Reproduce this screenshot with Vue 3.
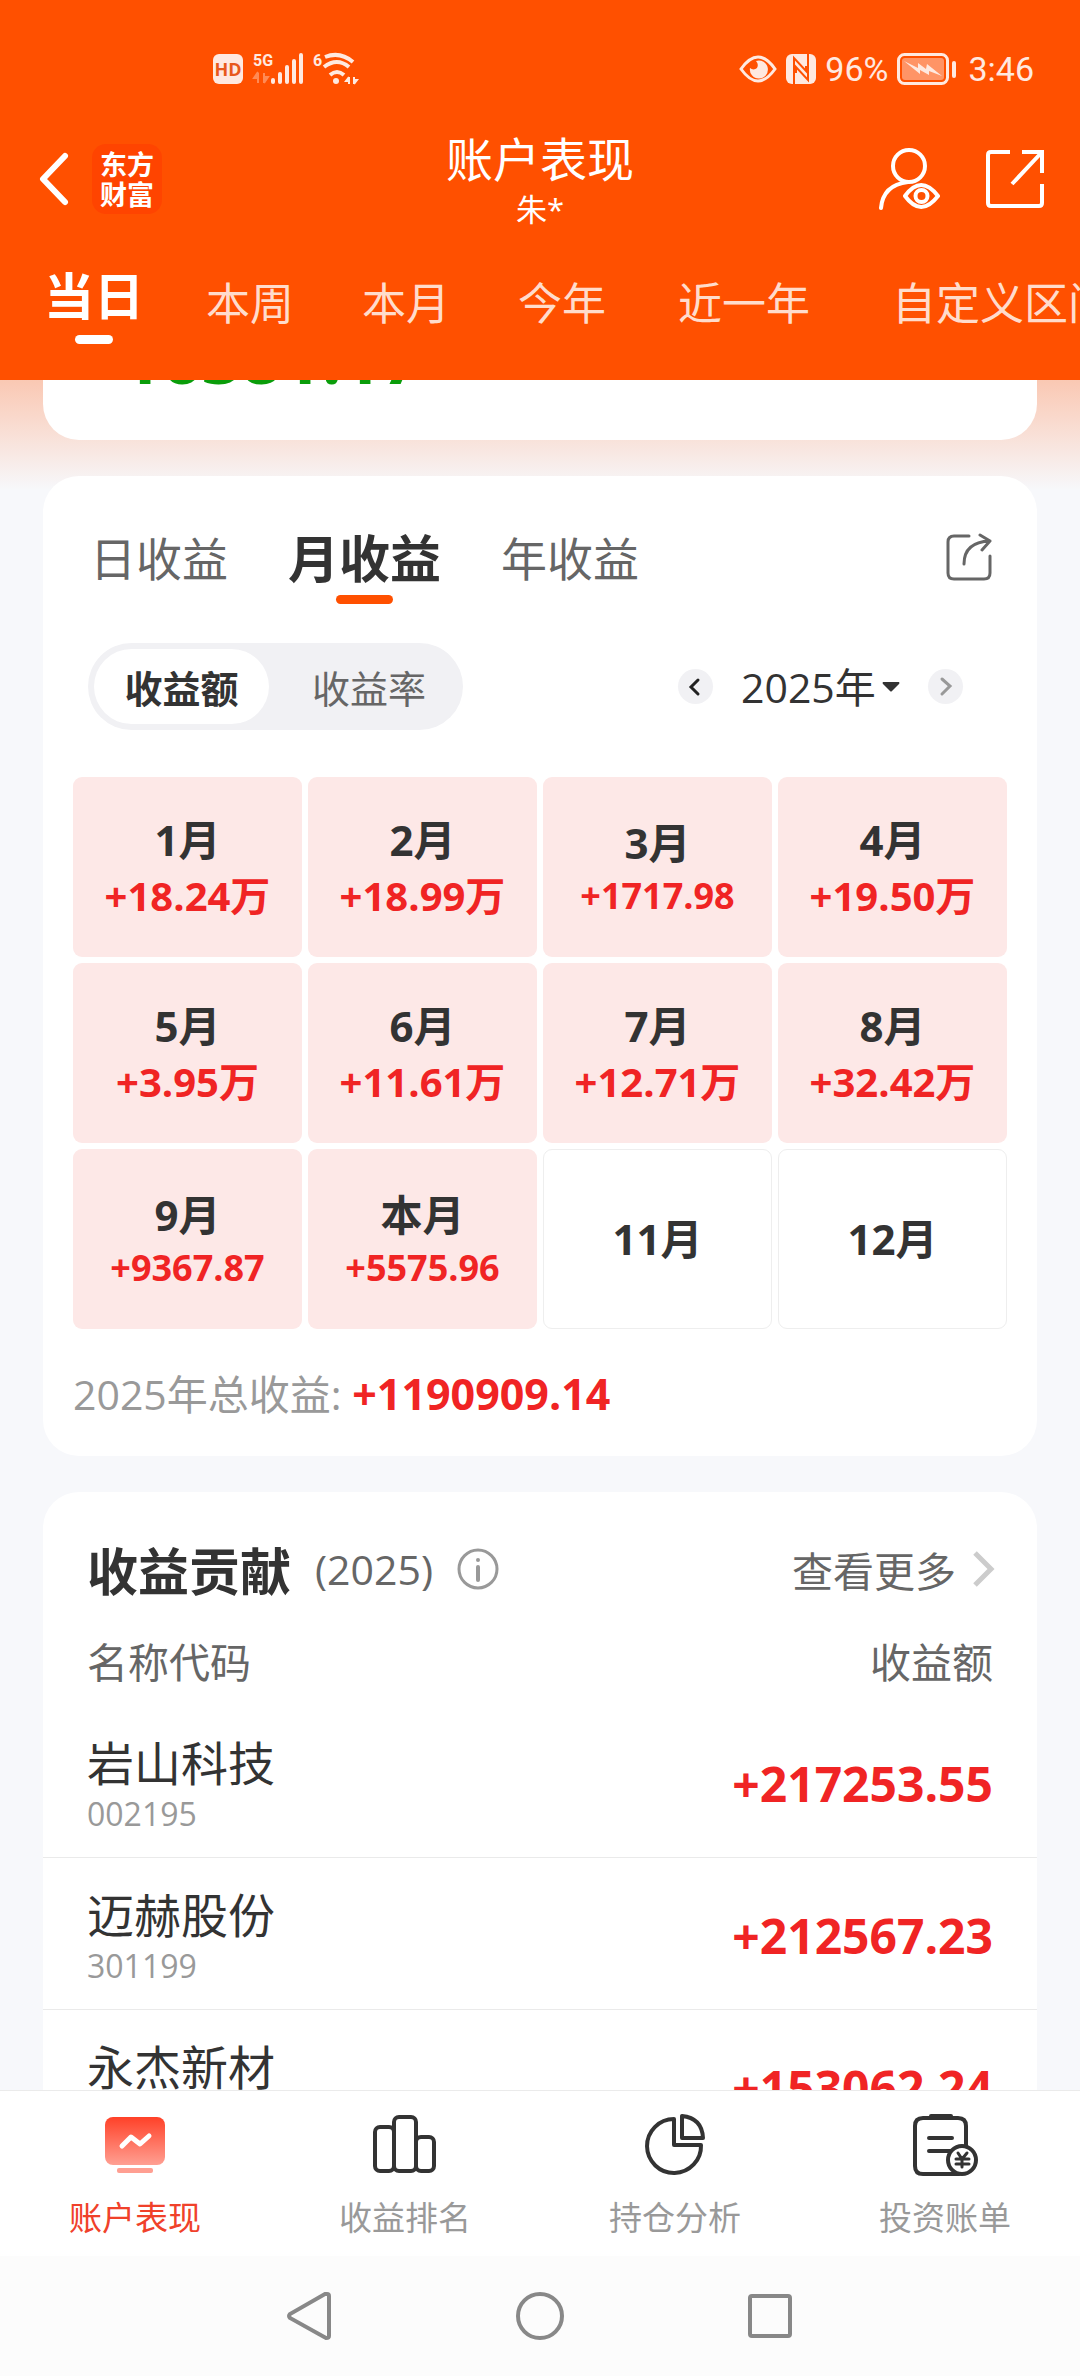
<template>
  <div class="page">
    <header class="header">
      <!-- Barra de estado -->
      <div class="status">
        <svg class="status-left" width="146" height="34" viewBox="0 0 146 34">
          <rect x="0" y="2" width="30" height="30" rx="6" fill="#ffe9e0" />
          <text x="15" y="24" class="hd" text-anchor="middle">HD</text>
          <text x="40" y="14" class="net">5G</text>
          <path d="M45 21v10M45 20l-4 6h4M51 21v10M51 31l4-6h-4" fill="#ff8a55" stroke="#ff8a55" stroke-width="2" />
          <g stroke="#ffe9e0" stroke-width="4" stroke-linecap="round">
            <path d="M60 28v2M67 22v8M74 15v15M81 9v21M88 3v27" />
          </g>
          <text x="100" y="14" class="net">6</text>
          <g fill="none" stroke="#ffe9e0" stroke-width="4">
            <path d="M112 5q15 -6 28 5M111 15q13 -10 25 0M117 23q7 -6 14 0" />
          </g>
          <circle cx="123" cy="29" r="3" fill="#ffe9e0" />
          <path d="M136 25v7M136 25l-3 4h3M141 25v7M141 32l3-4h-3" fill="#ffe9e0" stroke="#ffe9e0" stroke-width="2" />
        </svg>
        <div class="status-right">
          <svg width="38" height="28" viewBox="0 0 38 28">
            <path d="M2 14Q19 -10 36 14Q19 38 2 14z" fill="none" stroke="#ffe9e0" stroke-width="3" />
            <path d="M17 6a9 9 0 1 1-6 7a5 5 0 0 0 7 0q2-4-1-7z" fill="#ffe9e0" />
          </svg>
          <svg width="30" height="30" viewBox="0 0 30 30">
            <rect width="30" height="30" rx="6" fill="#ffe9e0" />
            <path d="M8 30V4L20 17V12M22 0v26L10 13v6" fill="none" stroke="#ff5000" stroke-width="2" />
          </svg>
          <span>96%</span>
          <svg class="battery" width="60" height="32" viewBox="0 0 60 32">
            <rect x="1.500" y="1.500" width="49" height="29" rx="6" fill="none" stroke="#ffe9e0" stroke-width="3" />
            <rect x="5" y="5" width="42" height="22" rx="3" fill="#ff9466" />
            <path d="M7 8l14 7 0-5 8 6 1-5 15 12-13-5 0 4-9-5 0 4z" fill="#ffe9e0" />
            <rect x="55" y="8" width="4" height="17" rx="2" fill="#ffe9e0" />
          </svg>
          <span>3:46</span>
        </div>
      </div>

      <!-- Navegación -->
      <div class="nav">
        <div class="nav-left">
          <button class="icon-btn" aria-label="返回">
            <svg width="34" height="58" viewBox="0 0 34 58">
              <path d="M29 6L7 29l22 23" fill="none" stroke="#fff" stroke-width="6" stroke-linecap="round" stroke-linejoin="round" />
            </svg>
          </button>
          <div class="logo"><span>东方</span><span>财富</span></div>
        </div>
        <div class="nav-title">
          <h1>账户表现</h1>
          <p>朱*</p>
        </div>
        <div class="nav-right">
          <button class="icon-btn" aria-label="账户">
            <svg width="62" height="62" viewBox="0 0 62 62" fill="none" stroke="#fff" stroke-width="4" stroke-linecap="round">
              <circle cx="31" cy="18" r="16" />
              <path d="M3 60Q5 37 30 34" />
              <path d="M27 48Q43 26 60 48Q43 70 27 48z" stroke-linejoin="round" />
              <circle cx="43.500" cy="48" r="6" />
            </svg>
          </button>
          <button class="icon-btn" aria-label="分享">
            <svg width="58" height="60" viewBox="0 0 58 60" fill="none" stroke="#fff" stroke-width="4">
              <path d="M24 3H5Q2 3 2 6V54Q2 57 5 57H53Q56 57 56 54V35M36 3H56V24M56 3L26 35" />
            </svg>
          </button>
        </div>
      </div>

      <nav class="ranges">
        <button
          v-for="r in ranges"
          :key="r"
          class="range"
          :class="{ active: r === range, wide: r.length > 2, custom: r.length > 4 }"
          @click="range = r"
        >
          {{ r }}
        </button>
      </nav>
    </header>

    <main class="content">
      <section class="card summary"><strong>-16381.17</strong></section>

      <!-- Calendario de ganancias -->
      <section class="card calendar">
        <div class="period-row">
          <button
            v-for="p in periods"
            :key="p"
            class="period"
            :class="{ active: p === period }"
            @click="period = p"
          >
            {{ p }}
          </button>
          <button class="icon-btn share" aria-label="分享收益">
            <svg width="46" height="48" viewBox="0 0 46 48" fill="none" stroke="#666" stroke-width="3" stroke-linecap="round" stroke-linejoin="round">
              <path d="M23 3H8Q2 3 2 9V40Q2 46 8 46H38Q44 46 44 40V23" />
              <path d="M18 31Q18 9 44 8M34 2L44 8L36 17" />
            </svg>
          </button>
        </div>

        <div class="filter-row">
          <div class="segment">
            <button :class="{ active: mode === 'amount' }" @click="mode = 'amount'">收益额</button>
            <button :class="{ active: mode === 'rate' }" @click="mode = 'rate'">收益率</button>
          </div>
          <div class="year-nav">
            <button class="round" aria-label="上一年">
              <svg width="35" height="35" viewBox="0 0 35 35"><path d="M20 11L13 18l7 7" fill="none" stroke="#222" stroke-width="3" stroke-linecap="round" /></svg>
            </button>
            <label class="year">
              <select v-model="year" aria-label="年份">
                <option value="2025">2025年</option>
                <option value="2024">2024年</option>
              </select>
              <svg width="18" height="10" viewBox="0 0 18 10"><path d="M1 0H17Q18 1 17 2L10 9Q9 10 8 9L1 2Q0 1 1 0z" fill="#333" /></svg>
            </label>
            <button class="round" aria-label="下一年">
              <svg width="35" height="35" viewBox="0 0 35 35"><path d="M14 10L22 17l-8 8" fill="none" stroke="#999" stroke-width="3" stroke-linecap="round" /></svg>
            </button>
          </div>
        </div>

        <div class="months">
          <div v-for="m in months" :key="m.name" class="month" :class="{ empty: !m.value }">
            <span class="month-name">{{ m.name }}</span>
            <span v-if="m.value" class="month-value" :class="{ small: !m.value.includes('万') }">{{ m.value }}</span>
          </div>
        </div>

        <p class="total">{{ year }}年总收益: <strong>+1190909.14</strong></p>
      </section>

      <!-- Contribución -->
      <section class="card contribution">
        <div class="contribution-head">
          <h2>收益贡献</h2>
          <span class="contribution-year">({{ year }})</span>
          <button class="icon-btn" aria-label="说明">
            <svg width="42" height="42" viewBox="0 0 42 42" fill="none" stroke="#999" stroke-width="3">
              <circle cx="21" cy="21" r="19" />
              <path d="M21 19V32" stroke-width="4" stroke-linecap="round" />
              <circle cx="21" cy="12" r="2" fill="#999" stroke="none" />
            </svg>
          </button>
          <a href="#" class="more">
            查看更多
            <svg width="22" height="36" viewBox="0 0 22 36"><path d="M2 2L18 18L2 34" fill="none" stroke="#ccc" stroke-width="5" /></svg>
          </a>
        </div>
        <table>
          <thead>
            <tr>
              <th>名称代码</th>
              <th class="right">收益额</th>
            </tr>
          </thead>
          <tbody>
            <tr v-for="s in stocks" :key="s.code">
              <td>
                <div class="stock-name">{{ s.name }}</div>
                <div class="stock-code">{{ s.code }}</div>
              </td>
              <td class="right profit">{{ s.profit }}</td>
            </tr>
          </tbody>
        </table>
      </section>
    </main>

    <nav class="tabbar">
      <a href="#" class="active">
        <svg width="66" height="66" viewBox="0 0 66 66">
          <defs>
            <linearGradient id="screen" x1="0" y1="0" x2="0" y2="1">
              <stop offset="0" stop-color="#ff4128" />
              <stop offset="1" stop-color="#ff9f92" />
            </linearGradient>
          </defs>
          <rect x="3" y="5" width="60" height="48" rx="8" fill="url(#screen)" />
          <path d="M20 34L29 25L38 32L47 24" fill="none" stroke="#fff" stroke-width="5" stroke-linecap="round" stroke-linejoin="round" />
          <rect x="15" y="56" width="36" height="5" rx="2" fill="#ff9f92" />
        </svg>
        <span>账户表现</span>
      </a>
      <a href="#">
        <svg width="66" height="66" viewBox="0 0 66 66" fill="none" stroke="#333" stroke-width="4">
          <rect x="3" y="15" width="19" height="44" rx="5" />
          <rect x="22" y="5" width="22" height="54" rx="5" />
          <rect x="44" y="25" width="18" height="34" rx="5" />
        </svg>
        <span>收益排名</span>
      </a>
      <a href="#">
        <svg width="66" height="66" viewBox="0 0 66 66" fill="none" stroke="#333" stroke-width="4" stroke-linejoin="round">
          <path d="M32 7A27 27 0 1 0 59 33H32z" />
          <path d="M40 4V26H61Q60 6 40 4z" />
        </svg>
        <span>持仓分析</span>
      </a>
      <a href="#">
        <svg width="66" height="66" viewBox="0 0 66 66" fill="none" stroke="#333" stroke-width="4" stroke-linecap="round">
          <path d="M47 62H11Q3 62 3 54V14Q3 6 11 6H46Q54 6 54 14V36" />
          <path d="M19 4H39M17 26H40M17 39H38" />
          <circle cx="50" cy="48" r="14" fill="#fff" />
          <path d="M46 41L50 47L55 41M50 47V55M44 47H57M44 52H57" stroke-width="3" />
        </svg>
        <span>投资账单</span>
      </a>
    </nav>

    <div class="sysnav">
      <button class="icon-btn" aria-label="后退">
        <svg width="48" height="48" viewBox="0 0 48 48"><path d="M41 2Q43 2 43 4V44Q43 46 40 46L4 26Q2 24 4 22L39 2z" fill="none" stroke="#888" stroke-width="4" /></svg>
      </button>
      <button class="icon-btn" aria-label="主页">
        <svg width="48" height="48" viewBox="0 0 48 48"><circle cx="24" cy="24" r="22" fill="none" stroke="#888" stroke-width="4" /></svg>
      </button>
      <button class="icon-btn" aria-label="最近">
        <svg width="48" height="48" viewBox="0 0 48 48"><rect x="4" y="4" width="40" height="40" rx="2" fill="none" stroke="#888" stroke-width="4" /></svg>
      </button>
    </div>
  </div>
</template>

<script setup>
import { ref } from 'vue'

const ranges = ['当日', '本周', '本月', '今年', '近一年', '自定义区间']
const range = ref('当日')

const periods = ['日收益', '月收益', '年收益']
const period = ref('月收益')

const mode = ref('amount')
const year = ref('2025')

const months = [
  { name: '1月', value: '+18.24万' },
  { name: '2月', value: '+18.99万' },
  { name: '3月', value: '+1717.98' },
  { name: '4月', value: '+19.50万' },
  { name: '5月', value: '+3.95万' },
  { name: '6月', value: '+11.61万' },
  { name: '7月', value: '+12.71万' },
  { name: '8月', value: '+32.42万' },
  { name: '9月', value: '+9367.87' },
  { name: '本月', value: '+5575.96' },
  { name: '11月', value: '' },
  { name: '12月', value: '' }
]

const stocks = [
  { name: '岩山科技', code: '002195', profit: '+217253.55' },
  { name: '迈赫股份', code: '301199', profit: '+212567.23' },
  { name: '永杰新材', code: '603271', profit: '+153062.24' }
]
</script>

<style>
body {
  margin: 0;
}
</style>

<style scoped>
.page {
  display: flex;
  flex-direction: column;
  height: 100vh;
  overflow: hidden;
  background: #f7f8fb;
  color: #333;
  font-family: "Noto Sans CJK SC", sans-serif;
}
button,
select {
  padding: 0;
  border: 0;
  background: none;
  color: inherit;
  font: inherit;
}
h1,
h2,
p {
  margin: 0;
  font-weight: 400;
}
svg {
  display: block;
  flex: none;
}
a {
  color: inherit;
  text-decoration: none;
}

/* Textos con cifras */
.nav-title p,
.summary,
.year,
.months,
.total,
.contribution-year,
.stock-code,
.profit {
  font-family: "Open Sans", "Noto Sans CJK SC", sans-serif;
}

/* Cabecera */
.header {
  flex: none;
  background: #ff5000;
  color: #fff;
}
.status {
  display: flex;
  align-items: center;
  justify-content: space-between;
  height: 42px;
  padding: 48px 46px 0 213px;
}
.status-right {
  display: flex;
  align-items: center;
  gap: 9px;
  color: #ffe9e0;
  font: 34px/42px Roboto, sans-serif;
}
.battery {
  margin-right: 2px;
}
.hd {
  font: bold 18px "Open Sans", sans-serif;
  fill: #e8591c;
}
.net {
  font: bold 16px Roboto, sans-serif;
  fill: #ffe9e0;
}
.nav {
  display: grid;
  grid-template-columns: 1fr auto 1fr;
  align-items: center;
  height: 178px;
  padding: 0 36px;
}
.nav-left,
.nav-right {
  display: flex;
  align-items: center;
  gap: 22px;
}
.nav-right {
  justify-content: flex-end;
  gap: 46px;
}
.logo {
  display: flex;
  flex-direction: column;
  align-items: center;
  justify-content: center;
  width: 70px;
  height: 70px;
  border-radius: 14px;
  background: #ff4400;
  font-size: 27px;
  font-weight: 700;
  line-height: 30px;
}
.nav-title {
  text-align: center;
}
.nav-title h1 {
  font-size: 47px;
  line-height: 60px;
}
.nav-title p {
  font-size: 31px;
  line-height: 44px;
}
.ranges {
  display: flex;
  align-items: flex-start;
  gap: 68px;
  height: 112px;
  padding-left: 44px;
  overflow: hidden;
}
.range {
  flex: none;
  color: #ffdccc;
  font-size: 44px;
  line-height: 66px;
  white-space: nowrap;
}
.range.active {
  margin-right: -6px;
  color: #fff;
  font-size: 50px;
  font-weight: 700;
  line-height: 50px;
}
.range.active::after,
.period.active::after {
  content: "";
  display: block;
  width: 38px;
  height: 9px;
  margin: 17px auto 0;
  border-radius: 5px;
  background: #fff;
}
.range.wide {
  margin-left: 4px;
}
.range.custom {
  margin-left: 14px;
}

/* Contenido */
.content {
  flex: 1;
  display: flex;
  flex-direction: column;
  gap: 36px;
  min-height: 0;
  padding: 0 43px;
  overflow: hidden;
  background: linear-gradient(#fac8b3, #f7f8fb 110px);
}
.card {
  flex: none;
  border-radius: 36px;
  background: #fff;
}
.summary {
  display: flex;
  align-items: flex-end;
  height: 60px;
  padding: 0 56px;
  border-radius: 0 0 36px 36px;
  overflow: hidden;
  color: #0a9d0a;
  font-size: 70px;
  line-height: 64px;
}
.summary strong {
  padding-bottom: 51px;
}
.period-row {
  display: flex;
  align-items: flex-start;
  gap: 60px;
  height: 78px;
  padding: 50px 45px 0 47px;
}
.period {
  color: #666;
  font-size: 46px;
  line-height: 60px;
}
.period.active {
  color: #333;
  font-size: 51px;
  font-weight: 700;
}
.period.active::after {
  width: 57px;
  margin-top: 9px;
  background: #ff5000;
}
.share {
  margin: 7px 0 0 auto;
}
.filter-row {
  display: flex;
  align-items: center;
  justify-content: space-between;
  margin-top: 39px;
  padding: 0 74px 0 45px;
}
.segment {
  display: flex;
  padding: 6px;
  border-radius: 44px;
  background: #f1f1f4;
}
.segment button {
  box-sizing: border-box;
  width: 188px;
  padding-left: 12px;
  border-radius: 38px;
  color: #666;
  font-size: 38px;
  line-height: 75px;
}
.segment .active {
  width: 175px;
  padding-left: 0;
  background: #fff;
  color: #333;
  font-weight: 700;
}
.year-nav {
  display: flex;
  align-items: center;
  gap: 28px;
}
.round {
  border-radius: 50%;
  background: #f1f1f4;
}
.year {
  display: flex;
  align-items: center;
  gap: 6px;
  font-size: 41px;
}
.year select {
  appearance: none;
  line-height: 60px;
}
.months {
  display: grid;
  grid-template-columns: repeat(4, 1fr);
  gap: 6px;
  margin: 47px 30px 0;
}
.month {
  display: flex;
  flex-direction: column;
  align-items: center;
  justify-content: center;
  box-sizing: border-box;
  height: 180px;
  border-radius: 9px;
  background: #fde8e7;
  font-weight: 700;
}
.month.empty {
  border: 1px solid #eee;
  background: #fff;
}
.month-name {
  font-size: 42px;
  line-height: 58px;
}
.month-value {
  color: #f02424;
  font-size: 40px;
  line-height: 54px;
}
.month-value.small {
  font-size: 36px;
  line-height: 48px;
}
.total {
  padding: 35px 30px 32px;
  color: #999;
  font-size: 41px;
  line-height: 60px;
}
.total strong,
.profit {
  color: #f02424;
}
.total strong {
  font-size: 43px;
}

/* Tabla */
.contribution-head {
  display: flex;
  align-items: center;
  height: 74px;
  padding: 40px 42px 0 44px;
}
.contribution-head h2 {
  margin-right: 24px;
  font-size: 51px;
  font-weight: 700;
}
.contribution-year {
  margin-right: 24px;
  color: #666;
  font-size: 41px;
}
.more {
  display: flex;
  align-items: center;
  gap: 17px;
  margin-left: auto;
  color: #666;
  font-size: 41px;
}
table {
  width: 100%;
  border-collapse: collapse;
}
th {
  padding: 24px 44px 16px;
  color: #666;
  font-size: 41px;
  font-weight: 400;
  line-height: 60px;
  text-align: left;
}
td {
  padding: 25px 44px 20px;
  border-bottom: 1px solid #eaeaea;
}
.right {
  text-align: right;
}
.stock-name {
  font-size: 47px;
  line-height: 60px;
}
.stock-code {
  color: #999;
  font-size: 32px;
  line-height: 46px;
}
.profit {
  font-size: 48px;
  font-weight: 700;
  line-height: 60px;
}

/* Barra inferior */
.tabbar {
  flex: none;
  display: grid;
  grid-template-columns: repeat(4, 1fr);
  border-top: 1px solid #ebebeb;
  background: #fff;
}
.tabbar a {
  display: flex;
  flex-direction: column;
  align-items: center;
  gap: 14px;
  padding: 21px 0 16px;
  color: #999;
  font-size: 33px;
  line-height: 48px;
}
.tabbar .active {
  color: #f0412a;
}
.sysnav {
  flex: none;
  display: flex;
  align-items: center;
  justify-content: center;
  gap: 182px;
  height: 120px;
  background: #fcfcfc;
}
</style>
